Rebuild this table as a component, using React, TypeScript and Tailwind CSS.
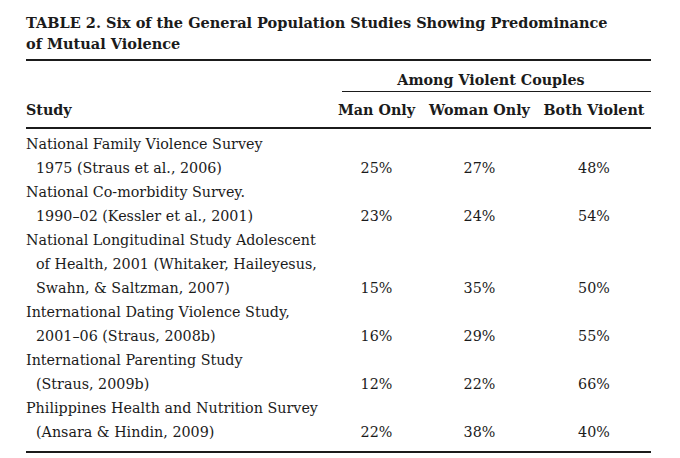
const rows = [
  { lines: ["National Family Violence Survey", "1975 (Straus et al., 2006)"], man: "25%", woman: "27%", both: "48%" },
  { lines: ["National Co-morbidity Survey.", "1990–02 (Kessler et al., 2001)"], man: "23%", woman: "24%", both: "54%" },
  {
    lines: ["National Longitudinal Study Adolescent", "of Health, 2001 (Whitaker, Haileyesus,", "Swahn, & Saltzman, 2007)"],
    man: "15%",
    woman: "35%",
    both: "50%",
  },
  { lines: ["International Dating Violence Study,", "2001–06 (Straus, 2008b)"], man: "16%", woman: "29%", both: "55%" },
  { lines: ["International Parenting Study", "(Straus, 2009b)"], man: "12%", woman: "22%", both: "66%" },
  { lines: ["Philippines Health and Nutrition Survey", "(Ansara & Hindin, 2009)"], man: "22%", woman: "38%", both: "40%" },
];

export default function App() {
  return (
    <div className="w-[680px] h-[458px] bg-white text-[#1b1b1b] font-['DejaVu_Serif',serif] pl-[26px] pr-[29px] pt-[12px]">
      {/* caption */}
      <h1 className="font-bold text-[14.5px] leading-[21px] mb-[5px]">
        TABLE 2. Six of the General Population Studies Showing Predominance
        <br />
        of Mutual Violence
      </h1>

      <div className="border-t-2 border-[#1b1b1b]" />

      {/* header */}
      <div className="grid grid-cols-[1fr_91px_115px_114px] font-bold text-[14.3px]">
        <div />
        <div className="col-span-3 pt-[8px] leading-[22px] text-center">Among Violent Couples</div>
        <div />
        <div className="col-span-3 ml-[11px] border-t-[1.5px] border-[#1b1b1b]" />
        <div className="pt-[6px] pb-[5px] leading-[24px]">Study</div>
        <div className="pt-[6px] pb-[5px] leading-[24px] text-center">Man Only</div>
        <div className="pt-[6px] pb-[5px] leading-[24px] text-center">Woman Only</div>
        <div className="pt-[6px] pb-[5px] leading-[24px] text-center">Both Violent</div>
      </div>

      <div className="border-t-2 border-[#1b1b1b]" />

      {/* body */}
      <div className="grid grid-cols-[1fr_91px_115px_114px] text-[14.3px] leading-[24px] pt-[3px] pb-[7px]">
        {rows.map((r) => (
          <div key={r.lines[0]} className="contents">
            <div>
              {r.lines.map((l, i) => (
                <div key={l} className={i > 0 ? "pl-[10px]" : ""}>
                  {l}
                </div>
              ))}
            </div>
            <div className="self-end text-center">{r.man}</div>
            <div className="self-end text-center">{r.woman}</div>
            <div className="self-end text-center">{r.both}</div>
          </div>
        ))}
      </div>

      <div className="border-t-2 border-[#1b1b1b]" />
    </div>
  );
}
